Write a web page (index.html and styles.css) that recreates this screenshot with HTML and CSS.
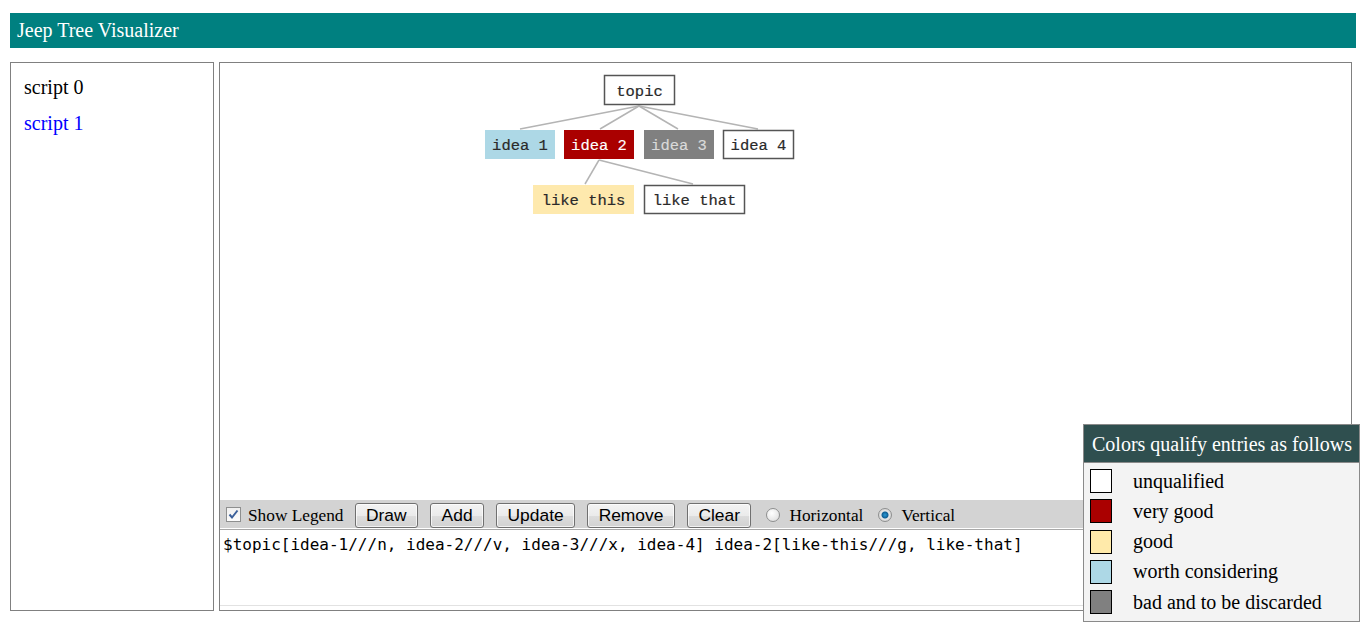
FILE: index.html
```html
<!DOCTYPE html>
<html>
<head>
<meta charset="utf-8">
<title>Jeep Tree Visualizer</title>
<link rel="stylesheet" href="styles.css">
</head>
<body>
<header class="title-bar">Jeep Tree Visualizer</header>
<main class="main">
  <nav class="scripts">
    <div class="script-item">script 0</div>
    <div class="script-item active">script 1</div>
  </nav>
  <section class="workspace">
    <div class="canvas">
      <svg class="tree" width="1131" height="437" viewBox="0 0 1131 437">
        <g stroke="#b4b4b4" stroke-width="1.5" fill="none">
          <line x1="419" y1="43" x2="300" y2="66"/>
          <line x1="419" y1="43" x2="380" y2="66"/>
          <line x1="419" y1="43" x2="458" y2="66"/>
          <line x1="419" y1="43" x2="538" y2="66"/>
          <line x1="379" y1="97" x2="365" y2="121"/>
          <line x1="379" y1="97" x2="473" y2="121"/>
        </g>
        <g class="node">
          <rect x="384.5" y="12.5" width="70" height="29" fill="#fff" stroke="#555" stroke-width="1.5"/>
          <text class="t-dark" x="419.5" y="29">topic</text>
        </g>
        <g class="node">
          <rect x="265" y="67" width="70" height="29" fill="#add8e6"/>
          <text class="t-dark" x="300" y="83">idea 1</text>
        </g>
        <g class="node">
          <rect x="344" y="67" width="70" height="29" fill="#aa0000"/>
          <text class="t-white" x="379" y="83">idea 2</text>
        </g>
        <g class="node">
          <rect x="424" y="67" width="70" height="29" fill="#808080"/>
          <text class="t-light" x="459" y="83">idea 3</text>
        </g>
        <g class="node">
          <rect x="503.5" y="67.5" width="70" height="28" fill="#fff" stroke="#555" stroke-width="1.5"/>
          <text class="t-dark" x="538.5" y="83">idea 4</text>
        </g>
        <g class="node">
          <rect x="313" y="122" width="101" height="29" fill="#fee9ad"/>
          <text class="t-dark" x="363.5" y="138">like this</text>
        </g>
        <g class="node">
          <rect x="424.5" y="122.5" width="100" height="28" fill="#fff" stroke="#555" stroke-width="1.5"/>
          <text class="t-dark" x="474.5" y="138">like that</text>
        </g>
      </svg>
    </div>
    <div class="toolbar">
      <label class="check">
        <span class="checkbox">
          <svg width="11" height="11" viewBox="0 0 11 11"><path d="M1.5 5.5 L4 8.5 L9.5 1.5" stroke="#3a5f9a" stroke-width="2" fill="none"/></svg>
        </span>
        <span class="label-text">Show Legend</span>
      </label>
      <button class="btn">Draw</button>
      <button class="btn">Add</button>
      <button class="btn">Update</button>
      <button class="btn">Remove</button>
      <button class="btn">Clear</button>
      <label class="radio-label first"><span class="radio"></span><span class="label-text">Horizontal</span></label>
      <label class="radio-label"><span class="radio checked"></span><span class="label-text">Vertical</span></label>
    </div>
    <textarea class="source" spellcheck="false">$topic[idea-1///n, idea-2///v, idea-3///x, idea-4] idea-2[like-this///g, like-that]</textarea>
  </section>
</main>
<aside class="legend">
  <div class="legend-title">Colors qualify entries as follows</div>
  <div class="legend-body">
    <div class="legend-row"><span class="swatch sw-white"></span><span>unqualified</span></div>
    <div class="legend-row"><span class="swatch sw-red"></span><span>very good</span></div>
    <div class="legend-row"><span class="swatch sw-yellow"></span><span>good</span></div>
    <div class="legend-row"><span class="swatch sw-blue"></span><span>worth considering</span></div>
    <div class="legend-row"><span class="swatch sw-gray"></span><span>bad and to be discarded</span></div>
  </div>
</aside>
</body>
</html>
```

FILE: styles.css
```css
* { box-sizing: border-box; }

html, body {
  margin: 0;
  background: #fff;
}

body {
  padding: 13px 0 0 10px;
  font-family: "Liberation Serif", "Times New Roman", serif;
  color: #000;
  width: 1366px;
  height: 627px;
  overflow: hidden;
}

.title-bar {
  width: 1346px;
  height: 35px;
  line-height: 35px;
  background: #008080;
  color: #fff;
  font-size: 20px;
  padding-left: 7px;
}

.main {
  margin-top: 14px;
  display: flex;
  gap: 5px;
  height: 549px;
}

.scripts {
  width: 204px;
  border: 1px solid #808080;
  padding: 6px 0 0 13px;
}

.script-item {
  font-size: 20px;
  line-height: 36px;
}

.script-item.active {
  color: #0000ff;
}

.workspace {
  width: 1133px;
  border: 1px solid #808080;
  display: flex;
  flex-direction: column;
}

.canvas {
  height: 437px;
  flex: none;
}

.tree {
  display: block;
}

.tree text {
  font-family: "Liberation Mono", "Courier New", monospace;
  font-size: 15.5px;
  text-anchor: middle;
  dominant-baseline: central;
  stroke-width: 0.2px;
}

.tree .t-dark { fill: #2a2a2a; stroke: #2a2a2a; }
.tree .t-white { fill: #ffffff; stroke: #ffffff; stroke-width: 0.15px; }
.tree .t-light { fill: #dadada; stroke: #dadada; stroke-width: 0.15px; }

.toolbar {
  height: 28px;
  flex: none;
  background: #d3d3d3;
  display: flex;
  align-items: center;
  padding: 2px 0 0 6px;
}

.check {
  display: flex;
  align-items: center;
}

.checkbox {
  width: 15px;
  height: 15px;
  border: 1px solid #8e8f8f;
  background: linear-gradient(#f0f0f0, #fcfcfc);
  display: flex;
  align-items: center;
  justify-content: center;
  margin-top: -1px;
}

.label-text {
  font-size: 17.3px;
  margin-left: 7px;
  position: relative;
  top: 1px;
}

.btn {
  margin-left: 12px;
  height: 25px;
  padding: 0 10.5px;
  font-family: "Liberation Sans", Arial, sans-serif;
  font-size: 17.4px;
  color: #000;
  background: linear-gradient(#f3f3f3, #ebebeb 50%, #dddddd 51%, #d2d2d2);
  border: 1px solid #707070;
  border-radius: 3px;
  box-shadow: inset 0 0 0 1px rgba(255, 255, 255, 0.7);
}

.check + .btn {
  margin-left: 11px;
}

.radio-label {
  display: flex;
  align-items: center;
  margin-left: 15px;
}

.radio-label .label-text {
  margin-left: 9px;
}

.radio {
  width: 14px;
  height: 14px;
  border-radius: 50%;
  border: 1px solid #8e8f8f;
  background: radial-gradient(circle at 40% 35%, #fff, #dadada);
  display: inline-block;
}

.radio.checked {
  background: radial-gradient(circle, #2a9ad6 0, #0f5f95 3px, #e8e8e8 4px, #d6d6d6 6px);
}

.source {
  display: block;
  flex: none;
  margin: 1px 0 4px;
  width: 100%;
  height: 77px;
  resize: none;
  border: none;
  border-top: 1px solid #a8a8a8;
  border-bottom: 1px solid #e2e2e2;
  padding: 5px 3px;
  font-family: "DejaVu Sans Mono", Consolas, monospace;
  font-size: 16px;
  line-height: 20px;
  color: #000;
  outline: none;
  overflow: hidden;
}

.legend {
  position: absolute;
  left: 1083px;
  top: 424px;
  width: 277px;
  border: 1px solid #8a8a8a;
  background: #f3f3f3;
}

.legend-title {
  height: 38px;
  line-height: 38px;
  background: #2f4f4f;
  color: #fff;
  font-size: 20px;
  padding-left: 8px;
  border-bottom: 1px solid #8a8a8a;
}

.legend-body {
  padding: 3px 0 4px 6px;
}

.legend-row {
  height: 30.25px;
  display: flex;
  align-items: center;
  font-size: 20px;
}

.swatch {
  width: 22px;
  height: 24px;
  border: 1px solid #000;
  margin-right: 21px;
  flex: none;
}

.sw-white { background: #fff; }
.sw-red { background: #aa0000; }
.sw-yellow { background: #ffeaaa; }
.sw-blue { background: #add8e6; }
.sw-gray { background: #808080; }
```
